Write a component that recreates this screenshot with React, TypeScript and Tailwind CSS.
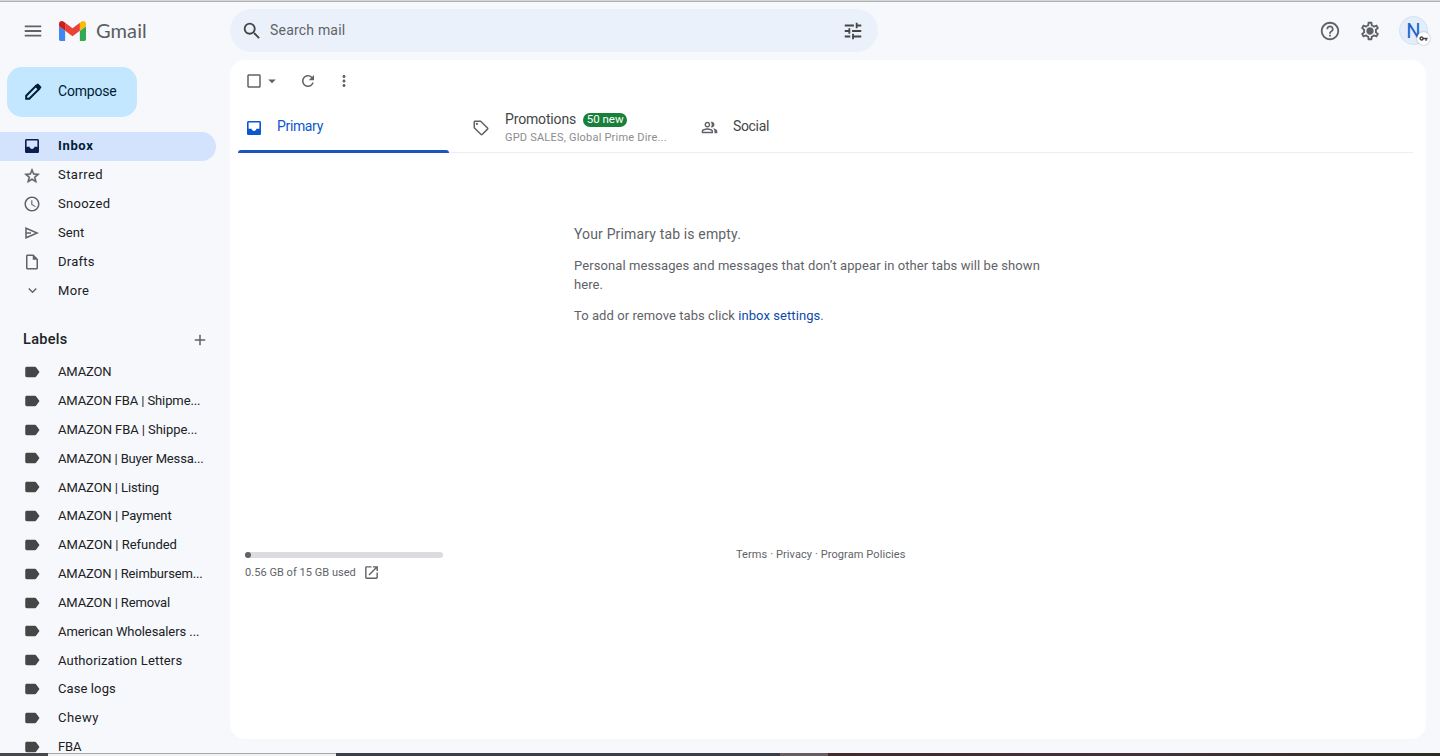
import type { ReactNode } from "react";
import {
  MdMenu, MdSearch, MdTune, MdHelpOutline, MdOutlineSettings, MdStarOutline, MdSchedule,
  MdOutlineInsertDriveFile, MdExpandMore, MdAdd, MdLabel, MdCheckBoxOutlineBlank,
  MdArrowDropDown, MdRefresh, MdMoreVert, MdOutlinePeopleAlt, MdOpenInNew, MdVpnKey, MdOutlineSell,
} from "react-icons/md";

function SendIcon() {
  return (
    <svg width="14" height="12" viewBox="0 0 14 12" fill="none" stroke="currentColor" strokeWidth="1.5">
      <path d="M1 1.2 12.2 6 1 10.8z" />
      <path d="M1 6h5" />
    </svg>
  );
}

function InboxIcon() {
  return (
    <svg width="14" height="14" viewBox="0 0 14 14" fill="currentColor" fillRule="evenodd">
      <path d="M1.6 0h10.8C13.3 0 14 .7 14 1.6v10.8c0 .9-.7 1.6-1.6 1.6H1.6C.7 14 0 13.3 0 12.4V1.6C0 .7.7 0 1.6 0zM1.6 1.6v6.2h3C4.7 9.1 5.7 10 7 10s2.300-.9 2.400-2.200h3V1.600z" />
    </svg>
  );
}

function PencilIcon() {
  return (
    <svg width="18" height="18" viewBox="0 0 18 18" className="ml-[17px]">
      <path d="M2.200 15.800V12.700L12 2.900l3.100 3.100-9.800 9.800z" fill="none" stroke="currentColor" strokeWidth="2" />
      <path d="m10.600 3.300 2.300-2.300c.5-.5 1.200-.5 1.700 0L17 3.400c.5.500.5 1.200 0 1.700l-2.300 2.300z" fill="currentColor" />
    </svg>
  );
}

const folders: { name: string; icon: ReactNode; track: string }[] = [
  { name: "Starred", icon: <MdStarOutline size={18} stroke="currentColor" strokeWidth={0.6} className="[&>path[fill=none]]:stroke-none" />, track: "tracking-[0.45px]" },
  { name: "Snoozed", icon: <MdSchedule size={18} />, track: "tracking-[0.3px]" },
  { name: "Sent", icon: <SendIcon />, track: "tracking-[0.1px]" },
  { name: "Drafts", icon: <MdOutlineInsertDriveFile size={18} />, track: "tracking-[0.25px]" },
  { name: "More", icon: <MdExpandMore size={17} />, track: "tracking-[0.35px]" },
];

const labels: { name: string; track: string }[] = [
  { name: "AMAZON", track: "tracking-[-0.15px]" },
  { name: "AMAZON FBA | Shipme...", track: "tracking-[-0.11px]" },
  { name: "AMAZON FBA | Shippe...", track: "tracking-[-0.06px]" },
  { name: "AMAZON | Buyer Messa...", track: "tracking-[-0.14px]" },
  { name: "AMAZON | Listing", track: "tracking-[-0.1px]" },
  { name: "AMAZON | Payment", track: "tracking-[-0.08px]" },
  { name: "AMAZON | Refunded", track: "tracking-[-0.02px]" },
  { name: "AMAZON | Reimbursem...", track: "tracking-[-0.13px]" },
  { name: "AMAZON | Removal", track: "tracking-[-0.12px]" },
  { name: "American Wholesalers ...", track: "tracking-[-0.08px]" },
  { name: "Authorization Letters", track: "tracking-[0.15px]" },
  { name: "Case logs", track: "tracking-[0.1px]" },
  { name: "Chewy", track: "tracking-[0.5px]" },
  { name: "FBA", track: "tracking-[-0.1px]" },
];

function GmailMark() {
  return (
    <svg width="27" height="20" viewBox="52 42 88 66" preserveAspectRatio="none">
      <path fill="#4285f4" d="M58 108h14V74L52 59v43c0 3.32 2.69 6 6 6" />
      <path fill="#34a853" d="M120 108h14c3.32 0 6-2.69 6-6V59l-20 15" />
      <path fill="#fbbc04" d="M120 48v26l20-15v-8c0-7.42-8.47-11.65-14.4-7.2" />
      <path fill="#ea4335" d="M72 74V48l24 18 24-18v26L96 92" />
      <path fill="#c5221f" d="M52 51v8l20 15V48l-5.6-4.2c-5.94-4.45-14.4-.22-14.4 7.2" />
    </svg>
  );
}

function Header() {
  return (
    <header className="flex h-[58px] shrink-0 items-center pb-px">
      <div className="flex w-[230px] items-center">
        <MdMenu size={22} className="ml-[22px] text-[#5f6368]" />
        <div className="ml-[15px]"><GmailMark /></div>
        <span className="ml-[10px] pb-[2px] font-[Lato,sans-serif] text-[20px] leading-6 tracking-[0.1px] text-[#5a5d61]">Gmail</span>
      </div>
      <div className="flex h-[43px] w-[648px] items-center rounded-full bg-[#eaf1fb] text-[#444746]">
        <MdSearch size={22} className="ml-[11px]" />
        <span className="ml-[7px] grow text-[14px] tracking-[0.2px] text-[#5f6368]">Search mail</span>
        <MdTune size={22} className="mr-[14px]" />
      </div>
      <div className="ml-auto flex items-center text-[#5f6368]">
        <MdHelpOutline size={22} />
        <div className="relative ml-[18px]">
          <MdOutlineSettings size={22} />
          <span className="absolute top-[8px] left-[8px] size-[6px] rounded-full bg-[#5f6368]" />
        </div>
        <div className="relative mr-[12px] ml-[18px] flex size-[29px] items-center justify-center rounded-full border border-[#d3e2f5] bg-[#e3edfb] text-[20px] text-[#1a66c9]">
          N
          <span className="absolute -right-[3px] -bottom-px flex size-[13px] items-center justify-center rounded-full bg-white text-[#444746] shadow-[0_0_2px_rgba(0,0,0,0.35)]">
            <MdVpnKey size={9} />
          </span>
        </div>
      </div>
    </header>
  );
}

function Sidebar() {
  return (
    <nav className="flex w-[230px] shrink-0 flex-col overflow-hidden text-[13px] text-[#202124]">
      <button className="mt-[7px] ml-[7px] flex h-[50px] w-[130px] shrink-0 items-center rounded-[15px] bg-[#c2e7ff] text-left text-[14px] tracking-[-0.2px] text-[#001d35]">
        <PencilIcon />
        <span className="ml-[16px] pb-[2px]">Compose</span>
      </button>
      <div className="mt-[15px] flex h-[29px] w-[216px] shrink-0 items-center rounded-r-full bg-[#d3e3fd] pb-px font-bold text-[#0b1f4f]">
        <span className="ml-[22px] flex w-5 justify-center"><InboxIcon /></span>
        <span className="ml-4 tracking-[0.65px] text-[#001d35]">Inbox</span>
      </div>
      <div className="-mt-[0.3px]">
        {folders.map((f) => (
          <div key={f.name} className="flex h-[28.8px] items-center">
            <span className="ml-[22px] flex w-5 justify-center pt-px text-[#5f6368]">{f.icon}</span>
            <span className={`ml-4 ${f.track}`}>{f.name}</span>
          </div>
        ))}
      </div>
      <div className="mt-[22px] flex h-[26px] shrink-0 items-center text-[14.5px] font-medium">
        <span className="ml-[23px] grow tracking-[0.3px]">Labels</span>
        <MdAdd size={18} className="mr-[21px] text-[#5f6368]" />
      </div>
      <div className="mt-[4.900px]">
        {labels.map((l) => (
          <div key={l.name} className="flex h-[28.84px] items-center whitespace-nowrap">
            <MdLabel size={18} className="ml-[23px] text-[#444746]" />
            <span className={`ml-[17px] ${l.track}`}>{l.name}</span>
          </div>
        ))}
      </div>
    </nav>
  );
}

function Toolbar() {
  return (
    <div className="flex h-[42px] items-center pb-px pl-[15px] text-[#5f6368]">
      <MdCheckBoxOutlineBlank size={18} />
      <MdArrowDropDown size={18} />
      <MdRefresh size={18} className="ml-[18px]" />
      <MdMoreVert size={18} className="ml-[18px]" />
    </div>
  );
}

function Tabs() {
  return (
    <div className="mr-[13px] ml-2 flex h-[51px] border-b border-[#eceff1] text-[14px] text-[#444746]">
      <div className="flex h-[51px] w-[211px] flex-col text-[#0b57d0]">
        <div className="flex h-[48px] shrink-0 items-center">
          <span className="mt-[3px] ml-[9px]"><InboxIcon /></span>
          <span className="ml-[16px] tracking-[-0.35px]">Primary</span>
        </div>
        <div className="h-[3px] shrink-0 rounded-t-full bg-[#1a56bc]" />
      </div>
      <div className="flex w-[239px] pl-[23px]">
        <MdOutlineSell size={18} className="mt-[17px] shrink-0 text-[#5f6368]" />
        <div className="ml-[15px] whitespace-nowrap">
          <div className="mt-[9px] flex h-[17px] items-center">
            <span className="tracking-[-0.15px]">Promotions</span>
            <span className="ml-[7px] flex h-[14px] w-[44px] items-center justify-center rounded-full bg-[#188038] text-[11.5px] text-white">50 new</span>
          </div>
          <div className="mt-px text-[11px] leading-[18px] tracking-[0.21px] text-[#8a8d90]">GPD SALES, Global Prime Dire...</div>
        </div>
      </div>
      <div className="flex h-[48px] items-center pl-[13px]">
        <MdOutlinePeopleAlt size={17} className="mt-[3px] text-[#5f6368]" />
        <span className="ml-[15px] tracking-[-0.35px]">Social</span>
      </div>
    </div>
  );
}

export default function App() {
  return (
    <div className="flex h-[756px] w-[1440px] flex-col overflow-hidden bg-[#f6f8fc] font-[Roboto,sans-serif]">
      <div className="h-[2px] shrink-0 border-b border-[#b0b1b4] bg-[#d5d7da]" />
      <Header />
      <div className="flex min-h-0 grow">
        <Sidebar />
        <main className="h-[679px] w-[1196px] rounded-[15px] bg-white">
          <Toolbar />
          <Tabs />
          <section className="mt-[71px] ml-[344px] h-[314px] w-[480px] text-[13px] leading-[19px] whitespace-nowrap text-[#5f6368]">
            <p className="text-[14px] leading-5 tracking-[0.15px]">Your Primary tab is empty.</p>
            <p className="mt-[12px] tracking-[0.09px]">Personal messages and messages that don’t appear in other tabs will be shown<br />here.</p>
            <p className="mt-[12px] tracking-[0.07px]">To add or remove tabs click <a className="text-[#0b4ba8]">inbox settings</a>.</p>
          </section>
          <footer className="flex pl-[15px] text-[11px] text-[#5f6368]">
            <div className="w-[198px]">
              <div className="mt-[14px] h-[6px] rounded-full bg-[#dadce0]">
                <div className="size-[6px] rounded-full bg-[#5f6368]" />
              </div>
              <div className="mt-[5px] flex h-[18px] items-center">
                <span className="pt-[2px] tracking-[0.04px]">0.56 GB of 15 GB used</span>
                <MdOpenInNew size={17} className="ml-[7px]" />
              </div>
            </div>
            <div className="mt-[8px] ml-[293px] leading-[18px] tracking-[0.09px]">Terms · Privacy · Program Policies</div>
          </footer>
        </main>
      </div>
      <div className="flex h-[3px] shrink-0">
        <div className="w-12 bg-[#46484b]" />
        <div className="w-72 border-t border-[#a7a8aa] bg-[#f0f1f2]" />
        <div className="w-[444px] bg-[#3b3e47]" />
        <div className="w-12 bg-[#665c62]" />
        <div className="grow bg-linear-to-r from-[#3f2b30] via-[#43313a] to-[#2b2d25]" />
      </div>
    </div>
  );
}
